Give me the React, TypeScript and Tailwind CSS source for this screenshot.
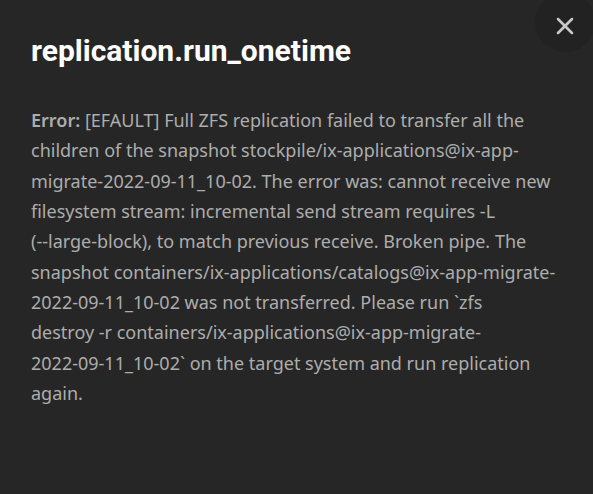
import { X } from 'lucide-react'

const lines = [
  '[EFAULT] Full ZFS replication failed to transfer all the',
  'children of the snapshot stockpile/ix-applications@ix-app-',
  'migrate-2022-09-11_10-02. The error was: cannot receive new',
  'filesystem stream: incremental send stream requires -L',
  '(--large-block), to match previous receive. Broken pipe. The',
  'snapshot containers/ix-applications/catalogs@ix-app-migrate-',
  '2022-09-11_10-02 was not transferred. Please run `zfs',
  'destroy -r containers/ix-applications@ix-app-migrate-',
  '2022-09-11_10-02` on the target system and run replication',
  'again.',
]

export default function App() {
  return (
    <div className="relative w-[593px] h-[494px] overflow-hidden bg-[#262626]">
      <button
        type="button"
        className="absolute -right-[2px] -top-[8px] w-[60px] h-[60px] rounded-full bg-[#222222] flex items-center justify-center"
      >
        <X className="w-[28px] h-[28px] text-[#c8c8c8] mt-[8px]" strokeWidth={2.2} />
      </button>
      <div className="px-[31px] pt-[32px]">
        <h1 className="text-[30px] font-bold leading-[38px] text-white font-['Roboto',sans-serif]">
          replication.run_onetime
        </h1>
        <p className="mt-[35px] text-[18px] leading-[30.33px] text-[#adadad] font-['Noto_Sans',sans-serif] whitespace-nowrap">
          {lines.map((l, i) => (
            <span key={i}>
              {i === 0 && <span className="font-semibold">Error: </span>}
              {l}
              <br />
            </span>
          ))}
        </p>
      </div>
    </div>
  )
}
